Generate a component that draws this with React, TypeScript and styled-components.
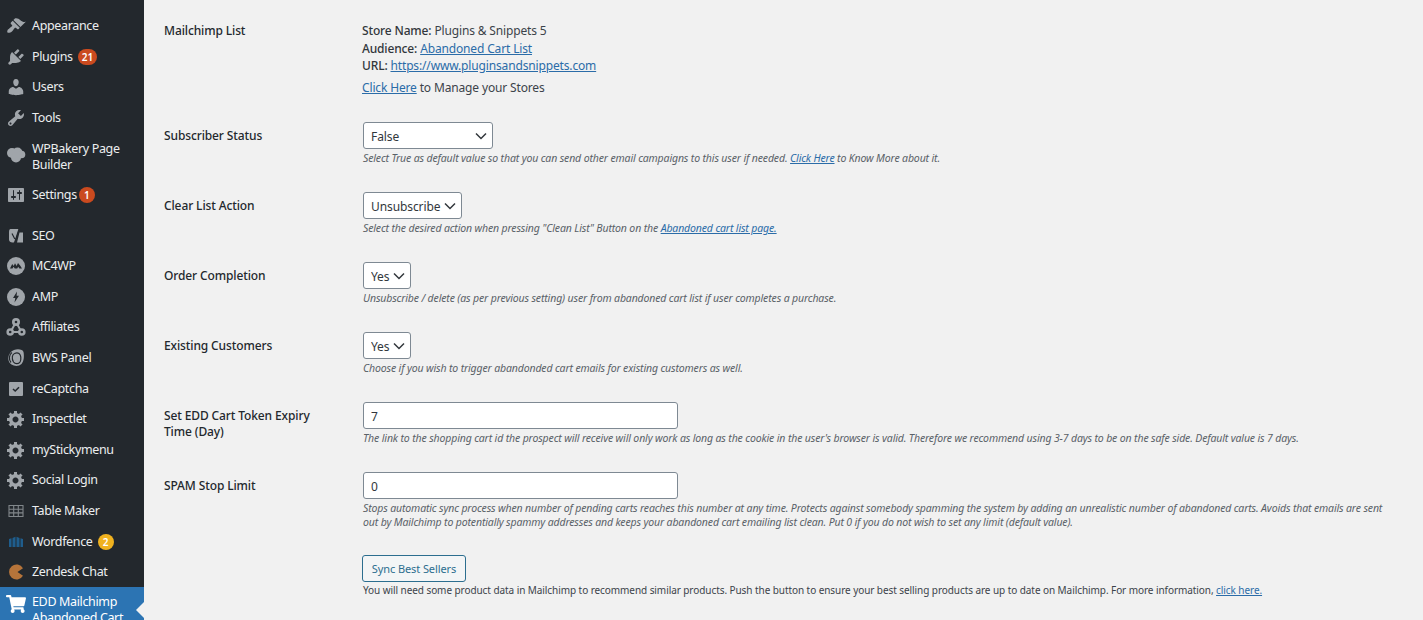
import type { ReactNode } from "react";
import styled, { createGlobalStyle } from "styled-components";
import { FaShoppingCart } from "react-icons/fa";

const GlobalStyle = createGlobalStyle`
  html, body {
    margin: 0;
    height: 100%;
    overflow: hidden;
    background: #f1f1f1;
  }
  body {
    font-family: "Noto Sans", "Open Sans", sans-serif;
    font-size: 12px;
    color: #3c434a;
  }
`;

const Page = styled.div`
  display: flex;
  height: 620px;
  overflow: hidden;
`;

const Sidebar = styled.nav`
  flex: 0 0 144px;
  height: 620px;
  padding-top: 11px;
  box-sizing: border-box;
  background: #23282d;
  overflow: hidden;
`;

const Item = styled.div<{ $tall?: boolean; $active?: boolean; $gapAfter?: boolean }>`
  position: relative;
  display: flex;
  align-items: ${({ $tall }) => ($tall ? "flex-start" : "center")};
  gap: 6px;
  box-sizing: border-box;
  height: ${({ $tall }) => ($tall ? "46.4px" : "30.6px")};
  padding: ${({ $tall }) => ($tall ? "8px" : "0")} 4px 0 6px;
  margin-bottom: ${({ $gapAfter }) => ($gapAfter ? "10px" : "0")};
  color: ${({ $active }) => ($active ? "#fff" : "#eceeef")};
  background: ${({ $active }) => ($active ? "#2c74b3" : "transparent")};
  font-size: 12.5px;
  line-height: 16px;
  letter-spacing: -0.35px;
  ${({ $active }) => $active && "height: 60px; padding-top: 7px; align-items: flex-start;"}
`;

const IconBox = styled.span<{ $active?: boolean; $low?: boolean }>`
  flex: 0 0 20px;
  width: 20px;
  height: 20px;
  margin-top: ${({ $low }) => ($low ? "3px" : "0")};
  display: flex;
  align-items: center;
  justify-content: center;
  color: ${({ $active }) => ($active ? "#fff" : "#a0a5aa")};
  svg {
    display: block;
  }
`;

const Label = styled.span`
  display: block;
`;

const Badge = styled.span<{ $amber?: boolean; $gap: number }>`
  display: inline-block;
  box-sizing: border-box;
  min-width: 16px;
  height: 16px;
  margin-left: ${({ $gap }) => $gap}px;
  padding: 0 4px;
  border-radius: 8px;
  background: ${({ $amber }) => ($amber ? "#f0b21f" : "#ca4a1f")};
  color: #fff;
  font-size: 10px;
  font-weight: 600;
  line-height: 16px;
  letter-spacing: 0;
  text-align: center;
  vertical-align: top;
`;

const Pointer = styled.span`
  position: absolute;
  right: 0;
  top: 15px;
  border: 8px solid transparent;
  border-right-color: #f1f1f1;
  border-left-width: 0;
`;

const Main = styled.main`
  flex: 1;
  min-width: 0;
  padding: 22px 0 0 20px;
`;

const Row = styled.div<{ $height: number }>`
  display: grid;
  grid-template-columns: 199px minmax(0, 1022px);
  height: ${({ $height }) => $height}px;
`;

const FieldName = styled.div`
  padding-top: 1px;
  font-weight: 500;
  line-height: 16px;
  letter-spacing: -0.12px;
  color: #23282d;
  width: 165px;
`;

const SelectName = styled(FieldName)`
  padding-top: 6px;
`;

const Field = styled.div`
  min-width: 0;
`;

const InfoList = styled.div`
  margin-left: -1px;
`;

const InfoLine = styled.div`
  line-height: 17.6px;
  letter-spacing: -0.15px;
  color: #3c434a;
  strong {
    font-weight: 500;
    color: #32373c;
  }
`;

const ManageLine = styled(InfoLine)`
  margin-top: 4px;
`;

const Link = styled.a`
  color: #2b6ca8;
  text-decoration: underline;
`;

const Select = styled.select<{ $width: number }>`
  display: block;
  appearance: none;
  width: ${({ $width }) => $width}px;
  height: 27px;
  margin: 0;
  padding: 1px 16px 0 7px;
  border: 1px solid #7e8993;
  border-radius: 3px;
  background: #fff
    url("data:image/svg+xml;utf8,<svg xmlns='http://www.w3.org/2000/svg' width='12' height='8' viewBox='0 0 12 8'><path d='M1 1.5l5 5 5-5' fill='none' stroke='%2332373c' stroke-width='1.5'/></svg>")
    no-repeat right 5px center;
  font-family: inherit;
  font-size: 12px;
  letter-spacing: -0.1px;
  color: #32373c;
`;

const TextInput = styled.input`
  display: block;
  box-sizing: border-box;
  width: 315px;
  height: 27px;
  margin: 0;
  padding: 1px 7px 0;
  border: 1px solid #7e8993;
  border-radius: 3px;
  background: #fff;
  font-family: inherit;
  font-size: 12px;
  color: #32373c;
`;

const Hint = styled.p`
  margin: 3px 0 0;
  font-size: 10.5px;
  font-style: italic;
  line-height: 13.5px;
  letter-spacing: -0.14px;
  color: #5a6168;
`;

const SyncButton = styled.button`
  display: block;
  box-sizing: border-box;
  width: 104px;
  height: 27px;
  margin: 0 0 0 -1px;
  padding: 0;
  border: 1px solid #2c6e8f;
  border-radius: 3px;
  background: #f3f5f6;
  font-family: inherit;
  font-size: 11px;
  letter-spacing: -0.1px;
  color: #2c6e8f;
`;

const SyncNote = styled.p`
  margin: 0;
  font-size: 10px;
  line-height: 16px;
  letter-spacing: -0.07px;
  color: #3c434a;
`;

const Icon = ({ d, size = 20 }: { d: string; size?: number }) => (
  <svg width={size} height={size} viewBox="0 0 20 20" fill="currentColor">
    <path d={d} />
  </svg>
);

const gear =
  "M18 12h-2.18c-.17.7-.44 1.35-.81 1.93l1.54 1.54-2.1 2.1-1.54-1.54c-.58.36-1.23.63-1.91.79V19H8v-2.18c-.68-.16-1.33-.43-1.91-.79l-1.54 1.54-2.12-2.12 1.54-1.54c-.36-.58-.63-1.23-.79-1.91H1V9.03h2.17c.16-.7.44-1.35.8-1.94L2.43 5.55l2.1-2.1 1.54 1.54c.58-.37 1.24-.64 1.93-.81V2h3v2.18c.68.16 1.33.43 1.91.79l1.54-1.54 2.12 2.12-1.54 1.54c.36.59.64 1.24.8 1.94H18V12zm-8.5 1.5c1.66 0 3-1.34 3-3s-1.34-3-3-3-3 1.34-3 3 1.34 3 3 3z";

const icons: Record<string, ReactNode> = {
  appearance: (
    <Icon d="M14.48 11.06L7.41 3.99l1.5-1.5c.5-.56 2.3-.47 3.51.32 1.21.8 1.43 1.28 2.91 2.1 1.18.64 2.45 1.26 4.45.85zm-.71.71L6.7 4.7 4.93 6.47c-.39.39-.39 1.02 0 1.41l1.06 1.06c.39.39.39 1.03 0 1.42-.6.6-1.43 1.11-2.21 1.69-.35.26-.7.53-1.01.84C1.43 13.23.78 15.78 1.5 16.5c.69.69 3.34.07 4.69-1.28.31-.31.58-.66.85-1.02.57-.78 1.08-1.61 1.69-2.21.39-.39 1.02-.39 1.41 0l1.06 1.06c.39.39 1.02.39 1.41 0z" />
  ),
  plugins: (
    <Icon d="M13.11 4.36L9.87 7.6 8 5.73l3.24-3.24c.35-.34 1.05-.2 1.56.32.52.51.66 1.21.31 1.55zm-8 1.77l.91-1.12 9.01 9.01-1.19.84c-.71.71-2.63 1.16-3.82 1.16H6.14L4.9 17.26c-.59.59-1.54.59-2.12 0-.59-.58-.59-1.53 0-2.12l1.24-1.24v-3.88c0-1.13.4-3.19 1.09-3.89zm7.26 3.97l3.24-3.24c.34-.35 1.04-.21 1.55.31.52.51.66 1.21.31 1.55l-3.24 3.25z" />
  ),
  users: (
    <Icon d="M10 9.25c-2.27 0-2.73-3.44-2.73-3.44C7 4.02 7.82 2 9.97 2c2.16 0 2.98 2.02 2.71 3.81 0 0-.41 3.44-2.68 3.44zm0 2.57L12.72 10c2.39 0 4.52 2.33 4.52 4.53v2.49s-3.65 1.13-7.24 1.13c-3.65 0-7.24-1.13-7.24-1.13v-2.49c0-2.25 1.94-4.48 4.47-4.48z" />
  ),
  tools: (
    <Icon d="M16.68 9.77c-1.34 1.34-3.3 1.67-4.95.99l-5.41 6.52c-.99.99-2.59.99-3.58 0s-.99-2.59 0-3.57l6.52-5.42c-.68-1.65-.35-3.61.99-4.95 1.28-1.28 3.12-1.62 4.72-1.06l-2.89 2.89 2.82 2.82 2.86-2.87c.53 1.58.18 3.39-1.08 4.65zM3.81 16.21c.4.39 1.04.39 1.43 0 .4-.4.4-1.04 0-1.43-.39-.4-1.03-.4-1.43 0-.39.39-.39 1.03 0 1.43z" />
  ),
  cloud: (
    <svg width="20" height="20" viewBox="0 0 20 20" fill="currentColor">
      <circle cx="6" cy="9" r="5" />
      <circle cx="11.5" cy="8.500" r="5" />
      <circle cx="15.500" cy="10.500" r="3.800" />
      <circle cx="10" cy="13.500" r="5" />
    </svg>
  ),
  settings: (
    <Icon d="M18 16V4c0-.55-.45-1-1-1H3c-.55 0-1 .45-1 1v12c0 .55.45 1 1 1h14c.55 0 1-.45 1-1zM8 11h1c.55 0 1 .45 1 1s-.45 1-1 1H8v1.5c0 .28-.22.5-.5.5s-.5-.22-.5-.5V13H6c-.55 0-1-.45-1-1s.45-1 1-1h1V5.5c0-.28.22-.5.5-.5s.5.22.5.5V11zm5-2h-1c-.55 0-1-.45-1-1s.45-1 1-1h1V5.5c0-.28.22-.5.5-.5s.5.22.5.5V7h1c.55 0 1 .45 1 1s-.45 1-1 1h-1v5.5c0 .28-.22.5-.5.5s-.5-.22-.5-.5V9z" />
  ),
  seo: (
    <svg width="20" height="20" viewBox="0 0 20 20">
      <path fill="currentColor" d="M4.500 3H13l-.6 1.600L8.500 16.500H6.500C4.500 16.500 3 15.200 3 13.500V6c0-1.700.7-3 1.500-3zM13.500 6.500H17v10h-6z" />
      <path fill="none" stroke="#23282d" strokeWidth="1.200" d="M6 7.500l2.800 5.500M13.500 1.500L8.500 17 6 18.500" />
    </svg>
  ),
  mc4wp: (
    <svg width="20" height="20" viewBox="0 0 20 20">
      <circle cx="10" cy="10" r="9" fill="currentColor" />
      <path fill="#23282d" d="M4 12.500l2.200-4.500 1.500 2 1.300-2.800 1.600 2.800 1.400-3 2.300 2.800 1.700 2.700h-2.600l-1.200-1.700-1 1.700H8.800L7.500 10.800 6.500 12.500z" />
    </svg>
  ),
  amp: (
    <svg width="20" height="20" viewBox="0 0 20 20">
      <circle cx="10" cy="10" r="9" fill="currentColor" />
      <path fill="#23282d" d="M11 4.500L7 11h2.300l-.8 4.500 4.500-6.700h-2.400z" />
    </svg>
  ),
  affiliates: (
    <svg width="20" height="20" viewBox="0 0 20 20">
      <path fill="none" stroke="currentColor" strokeWidth="2" d="M10 5L4.500 15h11z" />
      <circle cx="10" cy="5" r="4" fill="currentColor" />
      <circle cx="4.200" cy="15" r="3.800" fill="currentColor" />
      <circle cx="15.800" cy="15" r="3.800" fill="currentColor" />
      <circle cx="4.200" cy="15" r="1.300" fill="#23282d" />
      <circle cx="15.800" cy="15" r="1.300" fill="#23282d" />
      <circle cx="10" cy="5" r="1.300" fill="#23282d" />
    </svg>
  ),
  bws: (
    <svg width="20" height="20" viewBox="0 0 20 20">
      <path fill="currentColor" d="M8 2c4-1.500 9-.5 9.500 2 .8 4 .5 9-2 12-2.500 2.500-7 2.500-10 .5C2 14.500 1.500 9 3.500 6 4.500 4 6 2.800 8 2z" />
      <path fill="none" stroke="#23282d" strokeWidth="1.200" d="M6 4.500c-3 2-3.500 7-1 10M8.500 5.500c-2.500 1-3 5-1 8.500 1.500 2 5 2.500 6.500 0 1.500-3 1-7-1-8.500-1.500-1-3-.7-4.500 0z" />
    </svg>
  ),
  recaptcha: (
    <svg width="20" height="20" viewBox="0 0 20 20">
      <rect x="3" y="3" width="14" height="14" rx="1" fill="currentColor" />
      <path fill="none" stroke="#23282d" strokeWidth="1.600" d="M7 10l2.200 2 3.800-3.700" />
    </svg>
  ),
  gear: <Icon d={gear} />,
  table: (
    <svg width="20" height="20" viewBox="0 0 20 20">
      <path
        fill="none"
        stroke="currentColor"
        strokeOpacity="0.75"
        strokeWidth="1.100"
        d="M3 4.500h14v11H3zM3 8.200h14M3 11.900h14M7.700 4.500v11M12.300 4.500v11"
      />
    </svg>
  ),
  wordfence: (
    <svg width="20" height="20" viewBox="0 0 20 20">
      <path fill="#1f5d8c" d="M3 7l2.500-.8V15H3zM6.500 6l3-1.300V15h-3zM10.500 4.700l3 1.300v9h-3zM14.500 6.200l2.500.8v8h-2.500z" />
    </svg>
  ),
  zendesk: (
    <svg width="20" height="20" viewBox="0 0 20 20">
      <path fill="#b5743a" d="M17 6.200A7.500 7.500 0 1 0 17 13.800L11.500 10z" />
    </svg>
  ),
  cart: <FaShoppingCart size={20} />,
};

interface MenuEntry {
  icon: string;
  lines: string[];
  badge?: string;
  badgeGap?: number;
  amber?: boolean;
  tall?: boolean;
  active?: boolean;
  gapAfter?: boolean;
}

const menu: MenuEntry[] = [
  { icon: "appearance", lines: ["Appearance"] },
  { icon: "plugins", lines: ["Plugins"], badge: "21", badgeGap: 5 },
  { icon: "users", lines: ["Users"] },
  { icon: "tools", lines: ["Tools"] },
  { icon: "cloud", lines: ["WPBakery Page", "Builder"], tall: true },
  { icon: "settings", lines: ["Settings"], badge: "1", badgeGap: 2, gapAfter: true },
  { icon: "seo", lines: ["SEO"] },
  { icon: "mc4wp", lines: ["MC4WP"] },
  { icon: "amp", lines: ["AMP"] },
  { icon: "affiliates", lines: ["Affiliates"] },
  { icon: "bws", lines: ["BWS Panel"] },
  { icon: "recaptcha", lines: ["reCaptcha"] },
  { icon: "gear", lines: ["Inspectlet"] },
  { icon: "gear", lines: ["myStickymenu"] },
  { icon: "gear", lines: ["Social Login"] },
  { icon: "table", lines: ["Table Maker"] },
  { icon: "wordfence", lines: ["Wordfence"], badge: "2", badgeGap: 5, amber: true },
  { icon: "zendesk", lines: ["Zendesk Chat"] },
  { icon: "cart", lines: ["EDD Mailchimp", "Abandoned Cart"], active: true },
];

export default function App() {
  return (
    <Page>
      <GlobalStyle />
      <Sidebar>
        {menu.map((entry) => (
          <Item
            key={entry.lines[0]}
            $tall={entry.tall}
            $active={entry.active}
            $gapAfter={entry.gapAfter}
          >
            <IconBox $active={entry.active} $low={entry.tall}>
              {icons[entry.icon]}
            </IconBox>
            <div>
              {entry.lines.map((line, i) => (
                <Label key={line}>
                  {line}
                  {entry.badge && i === 0 && (
                    <Badge $amber={entry.amber} $gap={entry.badgeGap ?? 4}>
                      {entry.badge}
                    </Badge>
                  )}
                </Label>
              ))}
            </div>
            {entry.active && <Pointer />}
          </Item>
        ))}
      </Sidebar>
      <Main>
        <Row $height={100}>
          <FieldName>Mailchimp List</FieldName>
          <Field>
            <InfoList>
              <InfoLine>
                <strong>Store Name:</strong> Plugins &amp; Snippets 5
              </InfoLine>
              <InfoLine>
                <strong>Audience:</strong> <Link href="#">Abandoned Cart List</Link>
              </InfoLine>
              <InfoLine>
                <strong>URL:</strong> <Link href="#">https://www.pluginsandsnippets.com</Link>
              </InfoLine>
              <ManageLine>
                <Link href="#">Click Here</Link> to Manage your Stores
              </ManageLine>
            </InfoList>
          </Field>
        </Row>
        <Row $height={70}>
          <SelectName>Subscriber Status</SelectName>
          <Field>
            <Select $width={130} defaultValue="False">
              <option>True</option>
              <option>False</option>
            </Select>
            <Hint>
              Select True as default value so that you can send other email campaigns to this user if
              needed. <Link href="#">Click Here</Link> to Know More about it.
            </Hint>
          </Field>
        </Row>
        <Row $height={70}>
          <SelectName>Clear List Action</SelectName>
          <Field>
            <Select $width={99}>
              <option>Unsubscribe</option>
              <option>Delete</option>
            </Select>
            <Hint>
              Select the desired action when pressing "Clean List" Button on the{" "}
              <Link href="#">Abandoned cart list page.</Link>
            </Hint>
          </Field>
        </Row>
        <Row $height={70}>
          <SelectName>Order Completion</SelectName>
          <Field>
            <Select $width={48}>
              <option>Yes</option>
              <option>No</option>
            </Select>
            <Hint>
              Unsubscribe / delete (as per previous setting) user from abandoned cart list if user
              completes a purchase.
            </Hint>
          </Field>
        </Row>
        <Row $height={70}>
          <SelectName>Existing Customers</SelectName>
          <Field>
            <Select $width={48}>
              <option>Yes</option>
              <option>No</option>
            </Select>
            <Hint>Choose if you wish to trigger abandonded cart emails for existing customers as well.</Hint>
          </Field>
        </Row>
        <Row $height={70}>
          <SelectName>Set EDD Cart Token Expiry Time (Day)</SelectName>
          <Field>
            <TextInput defaultValue="7" />
            <Hint>
              The link to the shopping cart id the prospect will receive will only work as long as the
              cookie in the user's browser is valid. Therefore we recommend using 3-7 days to be on the
              safe side. Default value is 7 days.
            </Hint>
          </Field>
        </Row>
        <Row $height={83}>
          <SelectName>SPAM Stop Limit</SelectName>
          <Field>
            <TextInput defaultValue="0" />
            <Hint>
              Stops automatic sync process when number of pending carts reaches this number at any time.
              Protects against somebody spamming the system by adding an unrealistic number of abandoned
              carts. Avoids that emails are sent out by Mailchimp to potentially spammy addresses and
              keeps your abandoned cart emailing list clean. Put 0 if you do not wish to set any limit
              (default value).
            </Hint>
          </Field>
        </Row>
        <Row $height={60}>
          <div />
          <Field>
            <SyncButton>Sync Best Sellers</SyncButton>
            <SyncNote>
              You will need some product data in Mailchimp to recommend similar products. Push the button
              to ensure your best selling products are up to date on Mailchimp. For more information,{" "}
              <Link href="#">click here.</Link>
            </SyncNote>
          </Field>
        </Row>
      </Main>
    </Page>
  );
}
